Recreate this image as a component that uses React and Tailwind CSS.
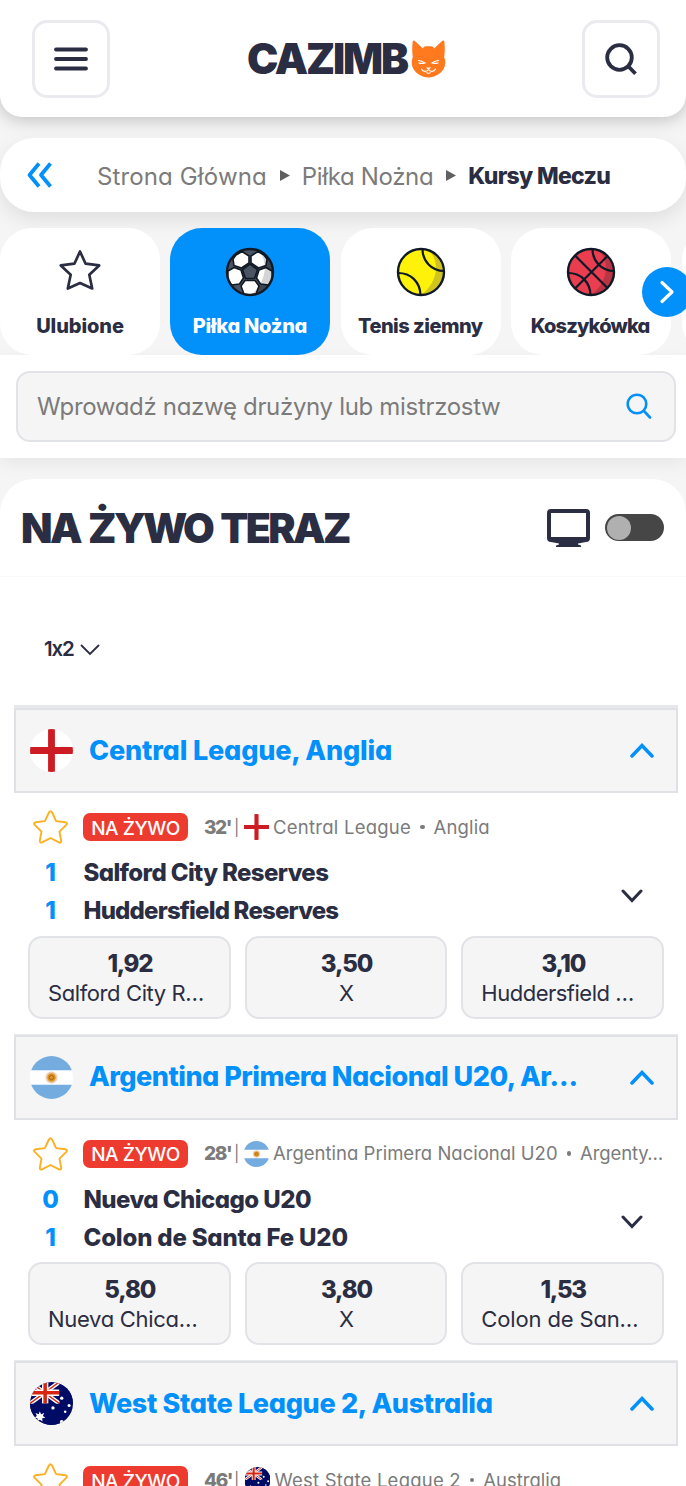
import React from "react";

function CatMark() {
  return (
    <svg width="35" height="38" viewBox="0 0 35 38" className="shrink-0">
      <path
        d="M1.600 2.200C1.700 0 3.200.2 4.400 1.400L12 8.500q0-2 2.500-2.300h6q2.500.3 2.500 2.300l7.600-7.100c1.200-1.200 2.700-1.400 2.800.8C33.900 7 34 12 33.200 17c1.200 2.800 1.400 6 .6 9-1.500 6-8.500 11.400-16.300 11.400S2.700 32 1.200 26c-.8-3-.6-6.200.6-9C1 12 1.100 7 1.600 2.200z"
        fill="#ff7a1f"
      />
      <g fill="none" stroke="#fff" strokeWidth="1.100" strokeLinecap="round">
        <path d="M7.500 20.500c2.200.2 4 .8 6.500 2.400-2.500.8-4.200.6-6 0M27.500 20.500c-2.200.2-4 .8-6.500 2.400 2.500.8 4.200.6 6 0" />
        <path d="M10.500 29c1.500 3.200 5.500 3 7 .5 1.500 2.500 5.500 2.700 7-.5" />
      </g>
      <path d="M15 27.500h5l-2.500 2.600zM14.500 32c2 1 4 1 6 0-1 2.400-5 2.400-6 0z" fill="#fff" />
    </svg>
  );
}

function Soccer() {
  return (
    <svg width="50" height="50" viewBox="0 0 50 50">
      <defs>
        <clipPath id="sc"><circle cx="25" cy="25" r="23" /></clipPath>
      </defs>
      <g clipPath="url(#sc)">
        <rect width="50" height="50" fill="#4b5463" />
        <g fill="#fff" stroke="#111a24" strokeWidth="1.600" strokeLinejoin="round">
          <path d="M11 8l6-3.500 7 4.500v7l-7.500 5L9 18.500 8 12z" />
          <path d="M39 8l-6-3.500L26 9v7l7.500 5 7.500-2.500 1-6.500z" />
          <path d="M3 24l6-3.500 7 2.500 2.500 8-4 6-8 1-4-6z" />
          <path d="M47 24l-6-3.500-7 2.500-2.500 8 4 6 8 1 4-6z" />
          <path d="M20 33.500h10l4 5.500-3 8-6 1-6-1-3-8z" />
        </g>
        <path d="M25 17l7.500 5.500-3 9h-9l-3-9z" fill="#4b5463" stroke="#111a24" strokeWidth="1.600" strokeLinejoin="round" />
        <path d="M33 3c10 10 10 30-7 45 20 2 30-20 19-38z" fill="#000" opacity=".17" />
      </g>
      <circle cx="25" cy="25" r="23" fill="none" stroke="#111a24" strokeWidth="2.400" />
    </svg>
  );
}

function Tennis() {
  return (
    <svg width="50" height="50" viewBox="0 0 50 50">
      <circle cx="25" cy="25" r="23" fill="#fff20a" />
      <path d="M33 3.500c12 12 8 33-8 44.500 22 0 32-30 8-44.500z" fill="#cfc41f" />
      <path d="M26.500 2c0 12 9 22 21.500 22M2 26c13 0 22 9 22.500 22" fill="none" stroke="#0e1826" strokeWidth="2.200" />
      <circle cx="25" cy="25" r="23" fill="none" stroke="#0e1826" strokeWidth="2.400" />
    </svg>
  );
}

function Basketball() {
  return (
    <svg width="50" height="50" viewBox="0 0 50 50">
      <circle cx="25" cy="25" r="23" fill="#ea3d4f" />
      <path d="M33 3.500c12 12 8 33-8 44.500 22 0 32-30 8-44.500z" fill="#b93544" />
      <path
        d="M26.500 2c0 12 9 22 21.500 22M2 26c13 0 22 9 22.500 22M9 8.500L41.500 41M41.500 9L9 41.500"
        fill="none"
        stroke="#0e1826"
        strokeWidth="2.200"
      />
      <circle cx="25" cy="25" r="23" fill="none" stroke="#0e1826" strokeWidth="2.400" />
    </svg>
  );
}

function FlagArt({ country }) {
  if (country === "england")
    return (
      <g>
        <rect width="44" height="44" fill="#fff" />
        <path d="M18.500 0h7v44h-7z" fill="#ce1c24" />
        <path d="M0 18.500h44v7H0z" fill="#ce1c24" />
      </g>
    );
  if (country === "argentina")
    return (
      <g>
        <rect width="44" height="44" fill="#fff" />
        <path d="M0 0h44v14.700H0zM0 29.300h44V44H0z" fill="#74acdf" />
        <circle cx="22" cy="22" r="6.200" fill="#e5bf98" opacity=".75" />
        <circle cx="22" cy="22" r="4.300" fill="#dc9320" />
        <circle cx="22" cy="22" r="2.200" fill="none" stroke="#a8601c" strokeWidth=".9" />
      </g>
    );
  return (
    <g>
      <rect width="44" height="44" fill="#000b66" />
      <path d="M0 0L30 22M30 0L0 22" stroke="#fff" strokeWidth="4.200" />
      <path d="M0 0L30 22M30 0L0 22" stroke="#d62612" strokeWidth="1.500" />
      <path d="M15.500 0v22M0 11h30" stroke="#fff" strokeWidth="6.500" />
      <path d="M15.500 0v22M0 11h30" stroke="#d62612" strokeWidth="3.600" />
      <path d="M0 22.200h31V44H0zM30.200 0H44v22.200H30.200z" fill="#000b66" />
      <path
        d="M10 30l1.300 3.100 3.200-1.300-1.300 3 2.600 1.700-3.300.7.300 3.300-2.700-2-2.700 2 .3-3.300-3.300-.7 2.600-1.700-1.300-3 3.200 1.300z"
        fill="#fff"
      />
      <g fill="#fff">
        <circle cx="32.500" cy="16.500" r="1.700" />
        <circle cx="23.500" cy="26.500" r="1.700" />
        <circle cx="40" cy="24" r="1.600" />
        <circle cx="36" cy="30.500" r="1.300" />
        <circle cx="32.500" cy="41" r="2" />
      </g>
    </g>
  );
}

function Flag({ country }) {
  return (
    <svg className="size-[43px] shrink-0 rounded-full" viewBox="0 0 44 44">
      <FlagArt country={country} />
    </svg>
  );
}

function SmallFlag({ country, className }) {
  return (
    <svg width="25" height="26" viewBox="1 0 42 44" className={"shrink-0 " + className}>
      <clipPath id={`small-${country}`}><circle cx="22" cy="22" r="22" /></clipPath>
      <g clipPath={`url(#small-${country})`}><FlagArt country={country} /></g>
    </svg>
  );
}

function Header() {
  return (
    <header className="relative z-10 flex h-[117px] items-center justify-between rounded-b-[22px] bg-white px-8 shadow-[0_2px_18px_rgba(0,0,0,0.24)]">
      <button className="flex size-[78px] items-center justify-center rounded-[15px] border-[3px] border-[#ebebef]">
        <svg width="34" height="24" viewBox="0 0 34 24" stroke="#2b2d42" strokeWidth="3.800" strokeLinecap="round">
          <path d="M2 2.500h30M2 12h30M2 21.500h30" />
        </svg>
      </button>
      <div className="flex items-center gap-[4px] pl-[1px]">
        <span className="text-[42px] leading-none font-black tracking-[-2.150px]">CAZIMB</span>
        <CatMark />
      </div>
      <button className="-mr-[6px] flex size-[78px] items-center justify-center rounded-[15px] border-[3px] border-[#ebebef]">
        <svg width="34" height="34" viewBox="0 0 34 34" fill="none" stroke="#2b2d42" strokeWidth="3.800">
          <circle cx="15.500" cy="15.500" r="12.300" />
          <path d="M24 24l7.500 7.800" />
        </svg>
      </button>
    </header>
  );
}

function Separator() {
  return (
    <svg width="10" height="11" viewBox="0 0 10 11" className="shrink-0">
      <path d="M0 0l10 5.500L0 11z" fill="#606060" />
    </svg>
  );
}

function Breadcrumb() {
  return (
    <nav className="mt-[21px] flex h-[74px] items-center rounded-[34px] bg-white pl-[27px] text-[24px] leading-none text-[#7b7b7b] shadow-[0_8px_20px_rgba(0,0,0,0.09)]">
      <svg width="26" height="26" viewBox="0 0 26 26" fill="none" stroke="#0290fb" strokeWidth="3.800" strokeLinejoin="round">
        <path d="M12 1.500L2.500 13 12 24.500M23.500 1.500L14 13l9.500 11.500" />
      </svg>
      <div className="flex items-center pt-[3px] whitespace-nowrap">
        <span className="ml-[44px] tracking-[0.130px]">Strona Główna</span>
        <span className="ml-[13px] pb-[3px]"><Separator /></span>
        <span className="ml-[12px] tracking-[-0.350px]">Piłka Nożna</span>
        <span className="ml-[13px] pb-[3px]"><Separator /></span>
        <span className="ml-[12px] pb-px text-[23px] font-extrabold tracking-[-0.700px] text-[#2b2d42]">Kursy Meczu</span>
      </div>
    </nav>
  );
}

function SportCard({ icon, label, active, className }) {
  return (
    <div
      className={
        "flex h-[126.500px] w-[160px] shrink-0 flex-col items-center rounded-[32px] pt-[19px] " +
        (active ? "bg-[#0290fb] text-white" : "bg-white")
      }
    >
      {icon}
      <span className={"mt-[19px] text-[20px] leading-[20px] font-extrabold whitespace-nowrap " + className}>{label}</span>
    </div>
  );
}

function Sports() {
  return (
    <div className="relative mt-[16px] h-[127px]">
      <div className="flex gap-[10.400px] overflow-hidden">
        <SportCard
          icon={
            <svg width="50" height="50" viewBox="0 0 50 50" fill="none" stroke="#2b2d42" strokeWidth="2.700" strokeLinejoin="round">
              <path d="M25 4.500l5.600 12.200 13.600 1.700-9.900 9.300 2.900 13.800L25 36l-12.200 5.500 2.900-13.800-9.900-9.300 13.600-1.700z" />
            </svg>
          }
          label="Ulubione"
          className="tracking-[-0.100px]"
        />
        <SportCard icon={<Soccer />} label="Piłka Nożna" active className="-ml-px tracking-[-0.250px]" />
        <SportCard icon={<Tennis />} label="Tenis ziemny" className="-ml-px tracking-[-0.500px]" />
        <SportCard icon={<Basketball />} label="Koszykówka" className="-ml-[2px] tracking-[-0.800px]" />
        <SportCard label="" className="" />
      </div>
      <button className="absolute top-[39px] left-[642px] flex size-[50px] items-center justify-center rounded-full bg-[#0290fb]">
        <svg width="16" height="24" viewBox="0 0 16 24" fill="none" stroke="#fff" strokeWidth="3.200" strokeLinecap="round" strokeLinejoin="round">
          <path d="M3 2.500l10 9.500-10 9.500" />
        </svg>
      </button>
    </div>
  );
}

function SearchBar() {
  return (
    <div className="bg-white pt-[16px] pr-[10px] pb-[16px] pl-4 shadow-[0_6px_16px_rgba(0,0,0,0.06)]">
      <div className="flex h-[71px] items-center justify-between rounded-[14px] border-2 border-[#e2e3e7] bg-[#f5f5f5] pr-[22px] pl-[19px]">
        <span className="text-[24px] leading-none tracking-[-0.320px] text-[#7b7b7b]">Wprowadź nazwę drużyny lub mistrzostw</span>
        <svg width="26" height="26" viewBox="0 0 26 26" fill="none" stroke="#0290fb" strokeWidth="2.600" strokeLinecap="round" className="mb-[2px]">
          <circle cx="11" cy="11" r="9.300" />
          <path d="M18 18l6 6.500" />
        </svg>
      </div>
    </div>
  );
}

function LiveTitle() {
  return (
    <div className="mt-[21px] flex h-[98px] items-center justify-between rounded-t-[34px] border-b border-[#f9f9f9] bg-white pr-[22px] pl-[21px]">
      <h1 className="pt-px text-[41px] leading-none font-black tracking-[-2.600px] [word-spacing:2.500px]">NA ŻYWO TERAZ</h1>
      <div className="flex items-center gap-[15px]">
        <svg width="43" height="38" viewBox="0 0 43 38">
          <path
            fillRule="evenodd"
            d="M4 0h35a4 4 0 0 1 4 4v25a4 4 0 0 1-4 4l-8 1.500v1l3 1V38H9v-1.500l3-1v-1L4 33a4 4 0 0 1-4-4V4a4 4 0 0 1 4-4zM4 4v24h35V4z"
            fill="#2b2d42"
          />
        </svg>
        <div className="flex h-[27px] w-[59px] items-center rounded-full bg-[#464646] pl-[1.500px]">
          <div className="size-[24px] rounded-full bg-[#b0b0b0]" />
        </div>
      </div>
    </div>
  );
}

function Odd({ value, name, center, valueClass, nameClass }) {
  return (
    <div className="flex h-[83px] flex-1 flex-col items-center rounded-[14px] border-2 border-[#e2e3e7] bg-[#f5f5f5] pt-[14px] pr-[17px] pl-[18px]">
      <span className={"text-[24px] leading-[24px] font-extrabold " + valueClass}>{value}</span>
      <span className={"mt-[6px] w-full text-[22px] leading-[22px] whitespace-nowrap " + (center ? "text-center " : "text-left ") + nameClass}>
        {name}
      </span>
    </div>
  );
}

function League({ l }) {
  return (
    <section className="h-[326.500px] shrink-0 pr-[8px] pl-[14px]">
      <div className="flex h-[85px] items-center border-2 border-[#e0e1e5] bg-[#f5f5f5] pr-[22px] pl-[14px] shadow-[0_-1px_0_#e8e9ec]">
        <Flag country={l.flag} />
        <h2 className={"ml-[16px] flex-1 pb-px text-[27px] leading-none font-extrabold whitespace-nowrap text-[#0290fb] " + l.titleClass}>{l.title}</h2>
        <svg width="24" height="15" viewBox="0 0 24 15" fill="none" stroke="#0290fb" strokeWidth="3.500" strokeLinecap="round">
          <path d="M2 13L12 2.500 22 13" />
        </svg>
      </div>
      <div className="mt-[17px] flex h-[34px] items-center pl-[19px] text-[18.500px] leading-none whitespace-nowrap text-[#7b7b7b]">
        <svg width="35" height="34" viewBox="0 0 35 34" fill="none" stroke="#fdb022" strokeWidth="1.900" strokeLinejoin="round">
          <path d="M15.900 2.500q1.600-2.600 3.200 0l4 8.600 9.400 1.200q2.400.6.800 2.600l-6.800 6.700 1.700 9.300q0 2.200-2.300 1.500L17.500 28l-8.400 4.400q-2.300.7-2.300-1.500l1.700-9.300-6.800-6.700q-1.600-2 .8-2.600l9.400-1.200z" />
        </svg>
        <span className="ml-[15px] flex h-[28px] w-[105px] items-center justify-center rounded-[7px] bg-[#ee3b30] pt-[2px] text-[19px] font-medium tracking-[-0.450px] text-white">
          NA ŻYWO
        </span>
        <span className="ml-[16px] w-[27px] text-[19px] font-extrabold tracking-[-1.400px]">{l.minute}'</span>
        <span className="ml-[3px] w-[5px] pb-px text-[16px]">|</span>
        <SmallFlag country={l.flag} className={l.flagClass} />
        <span className={l.metaClass}>{l.league}</span>
        <span className="mr-[9px] ml-[9px] size-[4.500px] rounded-full bg-[#7b7b7b]" />
        <span className={l.countryClass}>{l.country}</span>
      </div>
      <div className="mt-[10px] flex h-[76px] items-center">
        <div className="flex w-[55px] flex-col pl-[18px] text-center text-[24px] leading-[38px] font-extrabold text-[#0290fb]">
          <span>{l.scores[0]}</span>
          <span>{l.scores[1]}</span>
        </div>
        <div className="ml-[14.500px] flex flex-1 flex-col text-[24px] leading-[38px] font-extrabold whitespace-nowrap">
          <span className={l.teamClasses[0]}>{l.teams[0]}</span>
          <span className={l.teamClasses[1]}>{l.teams[1]}</span>
        </div>
        <svg width="22" height="14" viewBox="0 0 22 14" fill="none" stroke="#2b2d42" strokeWidth="3" strokeLinecap="round" className="mt-[7px] mr-[35px]">
          <path d="M2 2l9 9.500L20 2" />
        </svg>
      </div>
      <div className="mt-[5.500px] flex gap-[14px] px-[14px]">
        {l.odds.map((o) => (
          <Odd key={o.name} {...o} />
        ))}
      </div>
    </section>
  );
}

const leagues = [
  {
    flag: "england",
    flagClass: "mx-[4.500px]",
    title: "Central League, Anglia",
    titleClass: "tracking-[-0.150px]",
    minute: "32",
    league: "Central League",
    metaClass: "tracking-[0.250px]",
    country: "Anglia",
    countryClass: "tracking-[0.150px]",
    scores: [1, 1],
    teams: ["Salford City Reserves", "Huddersfield Reserves"],
    teamClasses: ["tracking-[-0.620px]", "tracking-[-0.820px]"],
    odds: [
      { value: "1,92", name: "Salford City R…", valueClass: "tracking-[-1.300px]", nameClass: "tracking-[-0.400px]" },
      { value: "3,50", name: "X", center: true, valueClass: "tracking-[-1.100px]", nameClass: "" },
      { value: "3,10", name: "Huddersfield …", valueClass: "tracking-[-1.300px]", nameClass: "tracking-[-0.500px]" },
    ],
  },
  {
    flag: "argentina",
    flagClass: "mx-[4.500px]",
    title: "Argentina Primera Nacional U20, Ar…",
    titleClass: "tracking-[-0.500px]",
    minute: "28",
    league: "Argentina Primera Nacional U20",
    metaClass: "tracking-[0.010px]",
    country: "Argenty…",
    countryClass: "tracking-[-0.120px]",
    scores: [0, 1],
    teams: ["Nueva Chicago U20", "Colon de Santa Fe U20"],
    teamClasses: ["tracking-[-0.550px]", "tracking-[-0.180px]"],
    odds: [
      { value: "5,80", name: "Nueva Chica…", valueClass: "tracking-[-1.100px]", nameClass: "tracking-[-0.300px]" },
      { value: "3,80", name: "X", center: true, valueClass: "tracking-[-1.100px]", nameClass: "" },
      { value: "1,53", name: "Colon de San…", valueClass: "tracking-[-1.300px]", nameClass: "tracking-[-0.150px]" },
    ],
  },
  {
    flag: "australia",
    flagClass: "mr-[5px] ml-[5.500px]",
    title: "West State League 2, Australia",
    titleClass: "tracking-[-0.320px]",
    minute: "46",
    league: "West State League 2",
    metaClass: "tracking-[0.220px]",
    country: "Australia",
    countryClass: "",
    scores: [],
    teams: [],
    teamClasses: [],
    odds: [],
  },
];

export default function App() {
  return (
    <div className="h-[1486px] w-[686px] overflow-hidden bg-[#f5f5f5] font-['Inter',sans-serif] text-[#2b2d42] [font-feature-settings:'cv11','calt'_0]">
      <Header />
      <Breadcrumb />
      <Sports />
      <SearchBar />
      <LiveTitle />
      <main className="bg-white">
        <div className="flex h-[128px] items-center gap-[6px] pt-[17px] pl-[44px]">
          <span className="text-[20.500px] leading-none font-semibold tracking-[-1.200px]">1x2</span>
          <svg width="20" height="12" viewBox="0 0 20 12" fill="none" stroke="#2b2d42" strokeWidth="1.800" strokeLinecap="round">
            <path d="M1.500 1.500L10 10l8.500-8.500" />
          </svg>
        </div>
        <div className="mr-[8px] mb-px ml-[14px] h-[2px] bg-[#e6e7ea]" />
        {leagues.map((l) => (
          <League key={l.flag} l={l} />
        ))}
      </main>
    </div>
  );
}
